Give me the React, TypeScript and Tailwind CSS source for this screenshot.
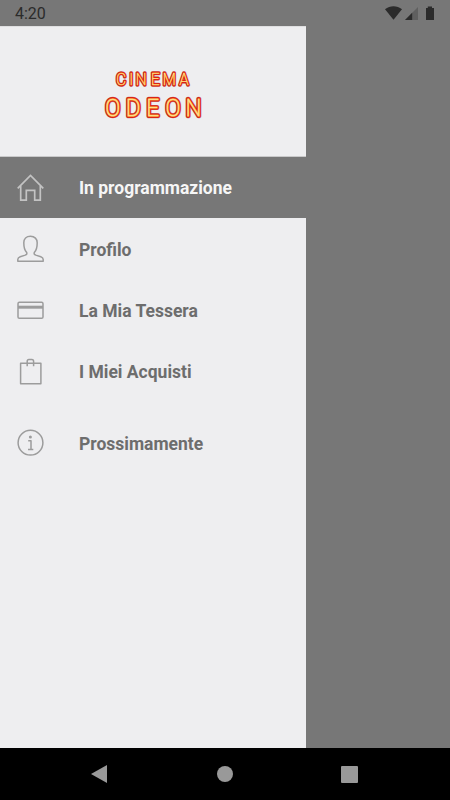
import React from 'react';

type IconName = 'home' | 'profile' | 'card' | 'bag' | 'info';

interface MenuItem {
  label: string;
  icon: IconName;
  active?: boolean;
}

const mainItems: MenuItem[] = [
  { label: 'In programmazione', icon: 'home', active: true },
  { label: 'Profilo', icon: 'profile' },
  { label: 'La Mia Tessera', icon: 'card' },
  { label: 'I Miei Acquisti', icon: 'bag' },
];

const infoItems: MenuItem[] = [{ label: 'Prossimamente', icon: 'info' }];

const iconShapes: Record<IconName, React.ReactNode> = {
  home: (
    <path d="M1.7 15.3 14.5 2.5 27.3 15.3M4.7 13V27.1H10.3V17.3H18.7V27.1H24.3V13" strokeWidth="1.7" strokeLinejoin="miter" />
  ),
  profile: (
    <path d="M14.5 2.3C10.3 2.3 7.8 5 7.8 8.7C7.8 12.3 8.5 16 10.5 18.2C11.3 19.8 10.7 20.5 9.2 21.1L4.2 22.8C2.3 23.5 1.8 24.3 1.8 25.5V27.2H27.2V25.5C27.2 24.3 26.7 23.5 24.8 22.8L19.8 21.1C18.3 20.5 17.7 19.8 18.5 18.2C20.5 16 21.2 12.3 21.2 8.7C21.2 5 18.7 2.3 14.5 2.3Z" />
  ),
  card: (
    <>
      <rect x="2" y="6.3" width="25" height="16" rx="1.4" />
      <path d="M2 11.2H27" strokeWidth="3" />
    </>
  ),
  bag: (
    <path d="M4.6 6.2H24.9V26.8H4.6ZM11.2 9.2V4.2C11.2 3.1 11.8 2.4 12.9 2.4H15.9C17 2.4 17.6 3.1 17.6 4.2V9.2" />
  ),
  info: (
    <>
      <circle cx="14.5" cy="14.7" r="12.4" />
      <path d="M12.2 12.7H15V21.2M12 21.4H17.3" />
      <circle cx="14.4" cy="9.1" r="1.5" fill="currentColor" stroke="none" />
    </>
  ),
};

const Icon: React.FC<{ name: IconName }> = ({ name }) => (
  <svg
    width="29"
    height="29"
    viewBox="0 0 29 29"
    fill="none"
    stroke="currentColor"
    strokeWidth="1.5"
    strokeLinejoin="round"
  >
    {iconShapes[name]}
  </svg>
);

// Neon lettering: the same words stacked from the dark outline to the bright tube
const neonLayers = [
  { color: '#8f2020', small: 3.7, large: 4.6, opacity: 0.55 },
  { color: '#dc2212', small: 2.9, large: 3.8, opacity: 1 },
  { color: '#f58a35', small: 0.8, large: 1.7, opacity: 1 },
  { color: '#ffe08a', small: 0.2, large: 0.5, opacity: 1 },
];

const Logo: React.FC = () => (
  <svg width="110" height="70" viewBox="0 0 110 70" strokeLinejoin="round" textAnchor="middle" className="overflow-visible">
    {neonLayers.map(({ color, small, large, opacity }) => (
      <g key={color} fill={color} stroke={color} opacity={opacity} className="font-['Roboto'] font-thin">
        <text x="24.5 35.1 45.4 60.3 74.9 90.5" y="23.3" fontSize="16" strokeWidth={small} transform="scale(0.95 1)">
          CINEMA
        </text>
        <text x="15.5 37.1 57.7 78.9 100.5" y="54" fontSize="23" strokeWidth={large} transform="scale(0.95 1)">
          ODEON
        </text>
      </g>
    ))}
  </svg>
);

const StatusBar: React.FC = () => (
  <div className="flex h-[26px] items-center justify-between pl-[15px] pr-[15px] text-[#2b2b2b]">
    <span className="pt-0.5 text-base leading-none">4:20</span>
    <svg width="50" height="15" viewBox="0 0 50 15" fill="currentColor">
      <path d="M0 3.3C5-.7 12-.7 17 3.3L8.5 13.7Z" />
      <path d="M33 1V14H20Z" opacity="0.3" />
      <path d="M27.2 6.8V14H20Z" />
      <path d="M42.8.5H47V2H49V14H41V2H42.8Z" />
    </svg>
  </div>
);

const MenuRow: React.FC<{ item: MenuItem }> = ({ item }) => (
  <div
    className={`flex h-[61.3px] items-center pl-4 ${
      item.active ? 'bg-[#777777] text-[#c3c3c3]' : 'text-[#9c9c9c]'
    }`}
  >
    <Icon name={item.icon} />
    <span
      className={`ml-[34px] pt-[3px] text-[17.5px] font-bold leading-none ${
        item.active ? 'text-[#f6f6f6]' : 'text-[#6d6d6d]'
      }`}
    >
      {item.label}
    </span>
  </div>
);

export default function App() {
  return (
    <div className="flex h-[800px] w-[450px] flex-col overflow-hidden bg-[#777777] font-['Roboto',sans-serif]">
      <StatusBar />
      <aside className="min-h-0 w-[306px] flex-1 border-t border-[#dfdfe0] bg-[#eeeef0]">
        <header className="flex h-[130px] items-start justify-center border-b border-[#c9c9ca] pt-[35px]">
          <Logo />
        </header>
        <nav>
          {mainItems.map(item => (
            <MenuRow key={item.label} item={item} />
          ))}
          <div className="mt-[10px]">
            {infoItems.map(item => (
              <MenuRow key={item.label} item={item} />
            ))}
          </div>
        </nav>
      </aside>
      <footer className="flex h-[52px] items-center bg-black pl-[91px] text-[#999999]">
        <svg width="16" height="18" viewBox="0 0 16 18" fill="currentColor">
          <path d="M0 9 16 0V18Z" />
        </svg>
        <div className="ml-[110px] h-4 w-4 rounded-full bg-[#999999]" />
        <div className="ml-[108px] h-[17px] w-[17px] rounded-[1px] bg-[#999999]" />
      </footer>
    </div>
  );
}
